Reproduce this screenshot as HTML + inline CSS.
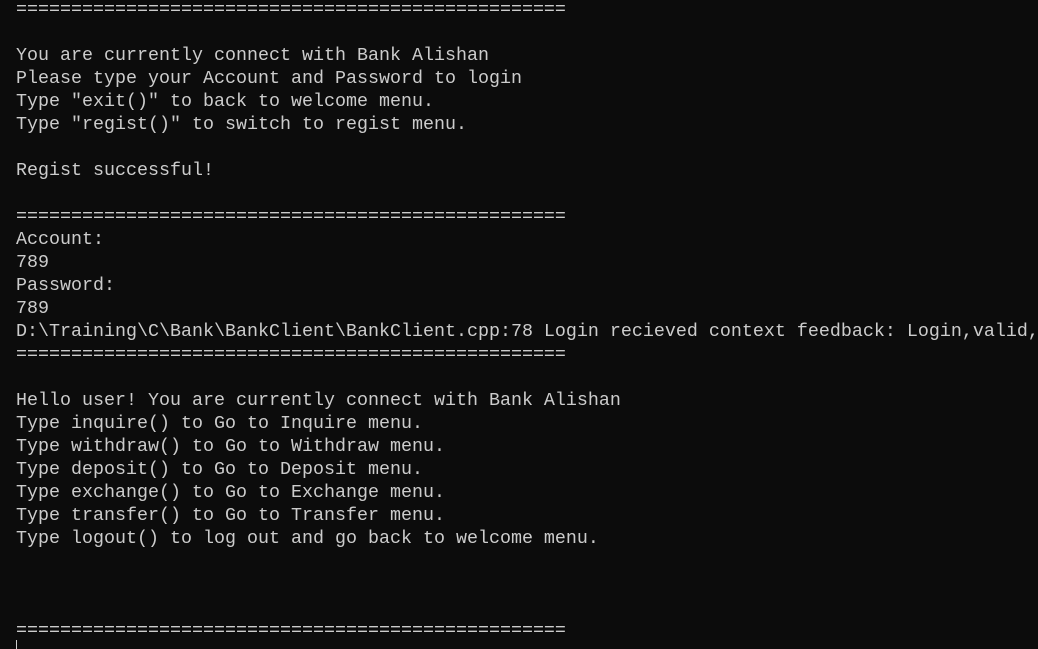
<!DOCTYPE html>
<html><head><meta charset="utf-8"><style>
html,body{margin:0;padding:0;background:#0c0c0c;width:1038px;height:649px;overflow:hidden}
pre{position:absolute;left:16px;top:-2px;margin:0;font-family:"Liberation Mono",monospace;font-size:18.33px;line-height:23px;color:#cccccc;white-space:pre}
.cur{position:absolute;left:16px;top:640px;width:1px;height:9px;background:#cccccc}
</style></head><body>
<pre>==================================================

You are currently connect with Bank Alishan
Please type your Account and Password to login
Type "exit()" to back to welcome menu.
Type "regist()" to switch to regist menu.

Regist successful!

==================================================
Account:
789
Password:
789
D:\Training\C\Bank\BankClient\BankClient.cpp:78 Login recieved context feedback: Login,valid,
==================================================

Hello user! You are currently connect with Bank Alishan
Type inquire() to Go to Inquire menu.
Type withdraw() to Go to Withdraw menu.
Type deposit() to Go to Deposit menu.
Type exchange() to Go to Exchange menu.
Type transfer() to Go to Transfer menu.
Type logout() to log out and go back to welcome menu.



==================================================</pre>
<div class="cur"></div>
</body></html>
